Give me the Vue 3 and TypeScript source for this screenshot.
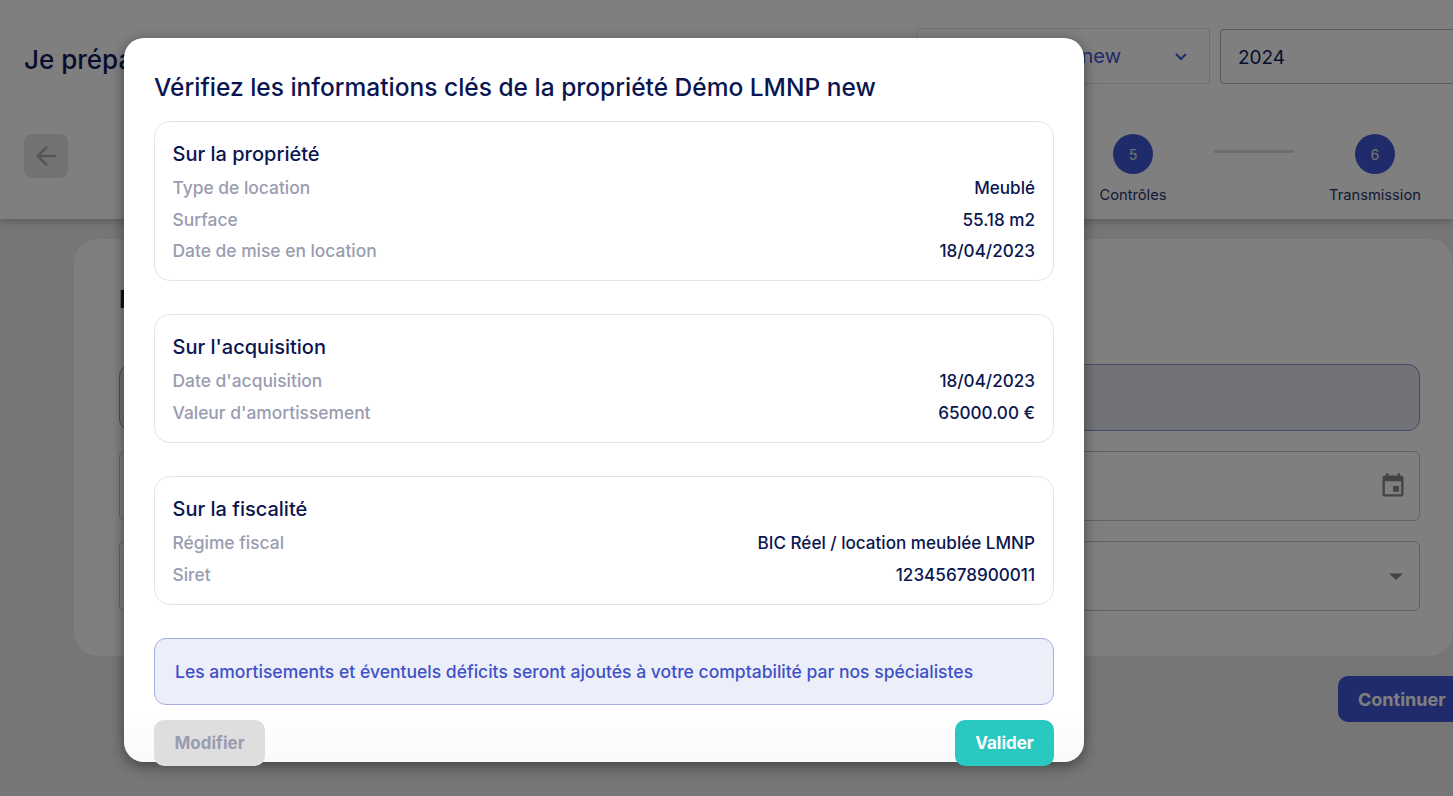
<template>
  <div class="page">
    <header class="top">
      <div class="top-row">
        <h1>Je prépare ma liasse fiscale</h1>
        <div class="select-box">
          <span>Démo LMNP new</span>
          <svg width="24" height="24" viewBox="0 0 24 24"><path d="M7 10l5 5 5-5" fill="none" stroke="#3e56d6" stroke-width="2" /></svg>
        </div>
        <div class="year-box">2024</div>
      </div>
      <div class="stepper">
        <button class="back">
          <svg width="30" height="30" viewBox="0 0 24 24"><path fill="#a8a8ac" d="M20 11H7.83l5.59-5.59L12 4l-8 8 8 8 1.41-1.41L7.83 13H20v-2z" /></svg>
        </button>
        <template v-for="(step, i) in steps" :key="i">
          <div class="step">
            <span class="dot">{{ i + 1 }}</span>
            <span class="step-label">{{ step }}</span>
          </div>
          <span v-if="i < steps.length - 1" class="step-line"></span>
        </template>
      </div>
    </header>

    <main class="content">
      <section class="form-card">
        <h2>Propriété</h2>
        <div class="field tinted"></div>
        <div class="field">
          <svg width="28" height="28" viewBox="0 0 24 24"><path fill="#888" d="M17 12h-5v5h5v-5zM16 1v2H8V1H6v2H5c-1.11 0-1.99.9-1.99 2L3 19c0 1.1.89 2 2 2h14c1.1 0 2-.9 2-2V5c0-1.1-.9-2-2-2h-1V1h-2zm3 18H5V8h14v11z" /></svg>
        </div>
        <div class="field">
          <svg class="drop" width="24" height="24" viewBox="0 0 24 24"><path fill="#888" d="M5 9.5l7 6.5 7-6.5z" /></svg>
        </div>
      </section>
      <div class="next-row"><button class="next">Continuer</button></div>
    </main>

    <div class="overlay">
      <div class="modal">
        <h3>Vérifiez les informations clés de la propriété Démo LMNP new</h3>
        <div class="groups">
          <section v-for="group in groups" :key="group.title" class="group">
            <h4>{{ group.title }}</h4>
            <div v-for="row in group.rows" :key="row[0]" class="row">
              <span class="key">{{ row[0] }}</span>
              <span class="val">{{ row[1] }}</span>
            </div>
          </section>
          <p class="notice">Les amortisements et éventuels déficits seront ajoutés à votre comptabilité par nos spécialistes</p>
        </div>
        <div class="actions">
          <button class="btn modify">Modifier</button>
          <button class="btn validate">Valider</button>
        </div>
      </div>
    </div>
  </div>
</template>

<script setup lang="ts">
type Group = {
  title: string;
  rows: [string, string][];
};

// the first four labels sit behind the modal
const steps: string[] = ["", "", "", "", "Contrôles", "Transmission"];

const groups: Group[] = [
  {
    title: "Sur la propriété",
    rows: [
      ["Type de location", "Meublé"],
      ["Surface", "55.18 m2"],
      ["Date de mise en location", "18/04/2023"],
    ],
  },
  {
    title: "Sur l'acquisition",
    rows: [
      ["Date d'acquisition", "18/04/2023"],
      ["Valeur d'amortissement", "65000.00 €"],
    ],
  },
  {
    title: "Sur la fiscalité",
    rows: [
      ["Régime fiscal", "BIC Réel / location meublée LMNP"],
      ["Siret", "12345678900011"],
    ],
  },
];
</script>

<style>
html,
body {
  margin: 0;
  height: 100%;
  overflow: hidden;
}
</style>

<style scoped>
.page {
  position: relative;
  width: 1453px;
  height: 796px;
  overflow: hidden;
  background: #ececec;
  font-family: Inter, "Liberation Sans", sans-serif;
  color: #0e1a5a;
}

.top {
  height: 219px;
  box-sizing: border-box;
  background: #fff;
  box-shadow: 0 2px 8px rgba(0, 0, 0, 0.25);
  position: relative;
  padding: 28px 0 0 24px;
}
.top-row {
  display: flex;
  align-items: flex-end;
  height: 56px;
}
h1 {
  margin: 0 0 9px;
  flex: 1;
  font-size: 26px;
  font-weight: 500;
  white-space: nowrap;
}
.select-box {
  width: 294px;
  height: 56px;
  box-sizing: border-box;
  border: 1px solid #e0e0e0;
  border-radius: 4px;
  display: flex;
  align-items: center;
  justify-content: flex-end;
  gap: 48px;
  padding-right: 16px;
  color: #3e56d6;
  font-size: 20px;
}
.year-box {
  width: 240px;
  height: 55px;
  box-sizing: border-box;
  margin-left: 10px;
  margin-right: -7px;
  border: 1px solid #b5b5b5;
  border-radius: 4px;
  padding-left: 17px;
  line-height: 55px;
  font-size: 19px;
}

.stepper {
  display: flex;
  margin-top: 50px;
}
.back {
  width: 44px;
  height: 44px;
  flex: none;
  padding: 0;
  border: none;
  border-radius: 8px;
  background: #e6e6e6;
  display: flex;
  align-items: center;
  justify-content: center;
  margin-right: 42px;
}
.step {
  width: 110px;
  flex: none;
  display: flex;
  flex-direction: column;
  align-items: center;
}
.dot {
  width: 40px;
  height: 40px;
  border-radius: 50%;
  background: #3e56d6;
  color: #ddd;
  font-size: 14px;
  font-weight: 500;
  display: flex;
  align-items: center;
  justify-content: center;
}
.step-label {
  margin-top: 12px;
  font-size: 14.7px;
  white-space: nowrap;
  color: #2a3566;
}
.step-line {
  width: 80px;
  height: 3px;
  flex: none;
  margin: 16px 26px 0;
  background: #ddd;
}

.content {
  padding: 20px 0 0 74px;
}
.form-card {
  height: 417px;
  box-sizing: border-box;
  background: #fff;
  border-radius: 24px;
  padding: 46px 33px 0 45px;
}
h2 {
  margin: 0 0 48px;
  height: 31px;
  font-size: 24px;
  font-weight: 600;
  color: #0e1a5a;
}
.field {
  height: 70px;
  box-sizing: border-box;
  margin-top: 20px;
  border: 1px solid #c4c4c4;
  border-radius: 6px;
  display: flex;
  align-items: center;
  justify-content: flex-end;
  padding-right: 12px;
}
.field.tinted {
  height: 67px;
  margin-top: 0;
  background: #e4e6ec;
  border-color: #8a94d4;
  border-radius: 12px;
}
.drop {
  margin-right: -1px;
}
.next-row {
  display: flex;
  justify-content: flex-end;
  margin-top: 20px;
}
.next {
  width: 115px;
  height: 46px;
  border: none;
  border-radius: 10px 0 0 10px;
  background: #3e56d6;
  color: #fff;
  font: 700 18px Inter, "Liberation Sans", sans-serif;
  text-align: left;
  padding: 1px 0 0 20px;
  white-space: nowrap;
}

.overlay {
  position: absolute;
  inset: 0;
  background: rgba(0, 0, 0, 0.5);
  display: flex;
  align-items: flex-start;
  padding: 38px 0 0 124px;
  box-sizing: border-box;
}
.modal {
  width: 960px;
  height: 724px;
  flex: none;
  box-sizing: border-box;
  padding: 32px 30px 0;
  background: linear-gradient(to bottom, #fff 93%, #fafafa 100%);
  border-radius: 20px;
  box-shadow: 0 4px 14px rgba(0, 0, 0, 0.45);
}
h3 {
  margin: 0;
  height: 34px;
  line-height: 34px;
  font-size: 24.5px;
  font-weight: 500;
  color: #0b1650;
  white-space: nowrap;
}
.groups {
  margin-top: 17px;
  display: flex;
  flex-direction: column;
  gap: 33px;
}
.group {
  border: 1px solid #e4e4e8;
  border-radius: 16px;
  padding: 17px 18px 13.6px 17.5px;
}
h4 {
  margin: 0 0 3px;
  height: 30px;
  line-height: 30px;
  font-size: 20px;
  font-weight: 500;
  color: #0b1650;
}
.row {
  display: flex;
  justify-content: space-between;
  height: 31.6px;
  line-height: 31.6px;
  font-size: 17.4px;
  font-weight: 500;
}
.key {
  color: #9a9cb0;
}
.val {
  color: #0b1650;
  font-size: 17.1px;
  font-weight: 550;
}
.notice {
  margin: 0;
  height: 67px;
  box-sizing: border-box;
  padding: 0 20px;
  line-height: 66px;
  font-size: 17.55px;
  font-weight: 500;
  color: #3f51c8;
  background: #eceef9;
  border: 1px solid #a5addf;
  border-radius: 12px;
}
.actions {
  margin-top: 15px;
  display: flex;
  justify-content: space-between;
}
.btn {
  height: 46px;
  border: none;
  border-radius: 10px;
  font: 700 17px Inter, "Liberation Sans", sans-serif;
  padding: 1px 20px 0;
}
.modify {
  width: 111px;
  background: #dedede;
  color: #9a9cb0;
}
.validate {
  width: 99px;
  background: #29c8c0;
  color: #fff;
}
</style>
